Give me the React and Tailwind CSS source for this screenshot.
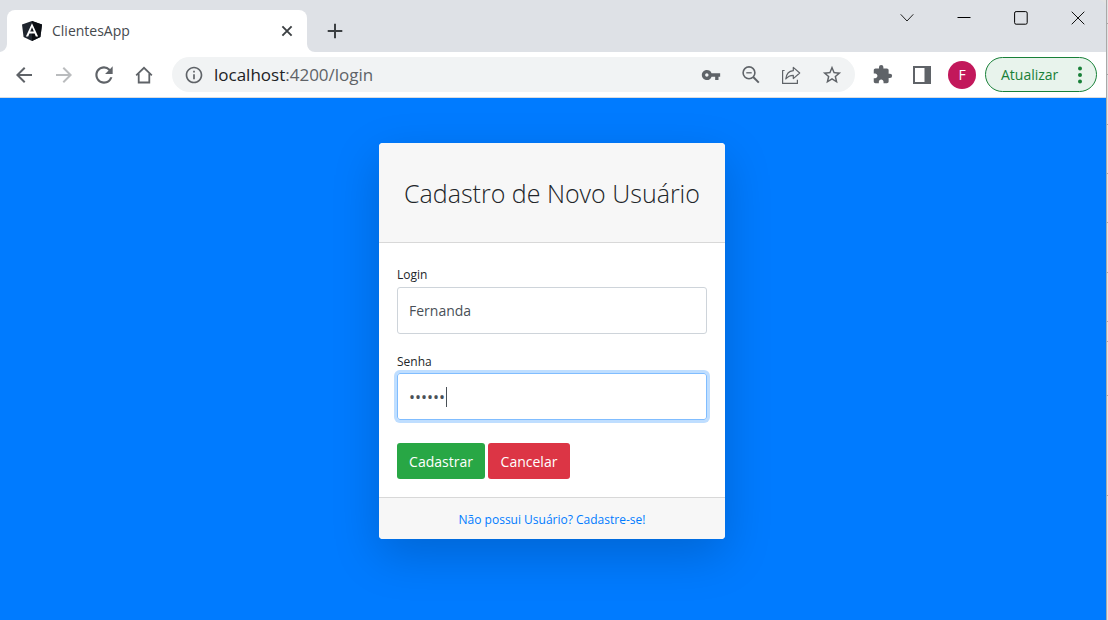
import { useState } from "react";
import {
  MdArrowBack,
  MdArrowForward,
  MdExtension,
  MdInfoOutline,
  MdRefresh,
  MdStarBorder,
  MdVpnKey,
} from "react-icons/md";

function AngularLogo() {
  return (
    <svg viewBox="0 0 20 20" className="size-5 shrink-0" aria-hidden="true">
      <path d="M10 0 0 3.5 1.6 16 10 20l8.4-4L20 3.5Z" fill="#1f252e" />
      <path d="M10 0v20l8.4-4L20 3.5Z" fill="#0b0e13" />
      <path
        d="M10 2.3 3.9 15.4h2.3l1.2-3h5.2l1.2 3h2.3Zm1.8 8.2H8.2L10 6.3Z"
        fill="#fff"
      />
    </svg>
  );
}

function TabCloseIcon() {
  return (
    <svg viewBox="0 0 12 12" className="size-3" fill="none" stroke="#3c4043" strokeWidth="1.9" aria-hidden="true">
      <path d="m1.4 1.4 9.2 9.2M10.6 1.4l-9.2 9.2" />
    </svg>
  );
}

function NewTabIcon() {
  return (
    <svg viewBox="0 0 16 16" className="size-4" fill="none" stroke="#3c4043" strokeWidth="2" aria-hidden="true">
      <path d="M8 .7v14.6M.7 8h14.6" />
    </svg>
  );
}

function ChevronIcon() {
  return (
    <svg viewBox="0 0 14 14" className="size-[14px]" fill="none" stroke="#222" aria-hidden="true">
      <path d="m.7 3.3 6.3 6.7 6.3-6.7" />
    </svg>
  );
}

function MinimizeIcon() {
  return (
    <svg viewBox="0 0 14 14" className="size-[14px]" fill="none" stroke="#000" aria-hidden="true">
      <path d="M.5 6.5h13" />
    </svg>
  );
}

function MaximizeIcon() {
  return (
    <svg viewBox="0 0 14 14" className="size-[14px]" fill="none" stroke="#000" aria-hidden="true">
      <rect x=".6" y=".6" width="12.6" height="12.6" rx="1.5" />
    </svg>
  );
}

function WindowCloseIcon() {
  return (
    <svg viewBox="0 0 14 14" className="size-[14px]" fill="none" stroke="#111" aria-hidden="true">
      <path d="m.7.7 12.6 12.6M13.3.7.7 13.3" />
    </svg>
  );
}

function HomeIcon() {
  return (
    <svg viewBox="0 0 24 24" className="size-6" fill="none" stroke="currentColor" strokeWidth="1.8" aria-hidden="true">
      <path d="m4.200 12.300 7.800-7.500 7.800 7.500" />
      <path d="M6.700 10.500v9h10.600v-9" />
    </svg>
  );
}

function ZoomOutIcon() {
  return (
    <svg viewBox="0 0 20 20" className="size-5" fill="none" stroke="#5f6368" aria-hidden="true">
      <circle cx="8" cy="7.800" r="5.900" strokeWidth="1.600" />
      <path d="M5.300 7.800h5.400" strokeWidth="1.300" />
      <path d="m12.200 12 5.600 5.600" strokeWidth="2" />
    </svg>
  );
}

function ShareIcon() {
  return (
    <svg
      viewBox="0 0 20 20"
      className="size-5"
      fill="none"
      stroke="#5f6368"
      strokeWidth="1.2"
      strokeLinejoin="round"
      aria-hidden="true"
    >
      <path d="M3.600 5.500H1.600v12.900h14.800v-3.600" />
      <path d="M12.300 2.400v3.300c-4.600.5-7 3.400-7.500 8.300 1.900-2.500 4.100-3.700 7.500-3.700v3.300l6.400-5.600Z" />
    </svg>
  );
}

function SidePanelIcon() {
  return (
    <svg viewBox="0 0 18 18" className="size-[18px]" aria-hidden="true">
      <path d="M0 0h18v18H0Zm2 2v14h9.500V2Z" fill="#5f6368" fillRule="evenodd" />
    </svg>
  );
}

function TabFoot({ className, d }) {
  return (
    <svg viewBox="0 0 8 8" className={className} fill="#fff" aria-hidden="true">
      <path d={d} />
    </svg>
  );
}

function TabStrip() {
  return (
    <div className="flex h-[52px] items-end bg-[#dee1e6]">
      <TabFoot className="-ml-px size-2" d="M8 0v8H0a8 8 0 0 0 8-8Z" />
      <div className="flex h-[42px] w-[300px] items-center rounded-t-lg bg-white pr-[14px] pl-[15px]">
        <AngularLogo />
        <span className="ml-[10px] flex-1 pb-0.5 text-[14px] text-[#45494d]">ClientesApp</span>
        <button type="button" aria-label="Fechar guia"><TabCloseIcon /></button>
      </div>
      <TabFoot className="size-2" d="M0 0v8h8a8 8 0 0 1-8-8Z" />
      <button type="button" aria-label="Nova guia" className="ml-3 flex h-[42px] items-center">
        <NewTabIcon />
      </button>
      <div className="ml-auto flex gap-[43px] self-start pt-[11px] pr-[21px]">
        <button type="button" aria-label="Pesquisar guias"><ChevronIcon /></button>
        <button type="button" aria-label="Minimizar"><MinimizeIcon /></button>
        <button type="button" aria-label="Maximizar"><MaximizeIcon /></button>
        <button type="button" aria-label="Fechar"><WindowCloseIcon /></button>
      </div>
    </div>
  );
}

function Toolbar() {
  return (
    <div className="flex h-[46px] items-center border-b border-[#dadce0] bg-white pr-[9px] pl-3 text-[#5f6368]">
      <div className="flex items-center gap-4">
        <button type="button" aria-label="Voltar"><MdArrowBack size={24} /></button>
        <button type="button" aria-label="Avançar" className="text-[#babcbe]"><MdArrowForward size={24} /></button>
        <button type="button" aria-label="Recarregar" className="-mx-px"><MdRefresh size={26} /></button>
        <button type="button" aria-label="Página inicial"><HomeIcon /></button>
      </div>
      <div className="ml-4 flex h-[35px] flex-1 items-center rounded-full bg-[#f1f3f4] pr-3 pl-3">
        <MdInfoOutline size={20} className="shrink-0" />
        <a href="/login" className="ml-[10px] flex-1 text-[17px] text-[#5f6368]">
          <span className="text-[#202124]">localhost</span>:4200/login
        </a>
        <div className="flex items-center gap-5">
          <button type="button" aria-label="Senhas"><MdVpnKey size={20} /></button>
          <button type="button" aria-label="Zoom"><ZoomOutIcon /></button>
          <button type="button" aria-label="Compartilhar"><ShareIcon /></button>
          <button type="button" aria-label="Favoritos"><MdStarBorder size={22} /></button>
        </div>
      </div>
      <button type="button" aria-label="Extensões" className="ml-[17px]"><MdExtension size={21} /></button>
      <button type="button" aria-label="Painel lateral" className="ml-5"><SidePanelIcon /></button>
      <button
        type="button"
        aria-label="Perfil"
        className="ml-[17px] size-7 rounded-full bg-[#c2185b] text-[14px] leading-7 text-white"
      >
        F
      </button>
      <button
        type="button"
        className="ml-[9px] flex h-[35px] w-28 items-center justify-between rounded-full border border-[#188038] bg-[#e8f3ec] pr-[14px] pl-[15px] text-[14px] text-[#188038]"
      >
        Atualizar
        <svg viewBox="0 0 4 18" className="h-[18px] w-1" fill="currentColor" aria-hidden="true">
          <circle cx="2" cy="2.5" r="2" />
          <circle cx="2" cy="9" r="2" />
          <circle cx="2" cy="15.5" r="2" />
        </svg>
      </button>
    </div>
  );
}

function SignUpCard() {
  const [login, setLogin] = useState("Fernanda");
  const [password, setPassword] = useState("123456");

  return (
    <section className="w-full max-w-[346px] overflow-hidden rounded bg-white shadow-[0_16px_48px_rgba(0,0,0,0.175)]">
      <header className="flex h-[100px] items-center justify-center border-b border-[#d8d8d8] bg-[#f7f7f7] pt-0.5">
        <h1 className="text-[25px] font-light text-[#212529]">Cadastro de Novo Usuário</h1>
      </header>
      <form className="px-[18px] pt-6 pb-[18px]" onSubmit={(event) => event.preventDefault()}>
        <label htmlFor="login" className="block text-[12px] leading-4 text-[#212529]">Login</label>
        <input
          id="login"
          type="text"
          value={login}
          onChange={(event) => setLogin(event.target.value)}
          className="mt-1 block h-[47px] w-full rounded-[3px] border border-[#ced4da] px-[11px] text-[14px] text-[#495057] outline-none"
        />
        <label htmlFor="senha" className="mt-5 block text-[12px] leading-4 text-[#212529]">Senha</label>
        <div className="relative mt-[3px]">
          <input
            id="senha"
            type="password"
            value={password}
            onChange={(event) => setPassword(event.target.value)}
            className="block h-[47px] w-full rounded-[3px] border border-[#80bdff] px-[11px] text-[16px] text-[#495057] caret-transparent shadow-[0_0_0_3px_#bfdeff] outline-none"
          />
          <span className="absolute top-[14px] left-[49px] h-5 w-px bg-[#495057]" />
        </div>
        <div className="mt-[23px] flex gap-[3px] text-[14px] text-white">
          <button type="submit" className="h-9 w-[88px] rounded-[3px] bg-[#28a745]">Cadastrar</button>
          <button type="button" className="h-9 w-[82px] rounded-[3px] bg-[#dc3545]">Cancelar</button>
        </div>
      </form>
      <footer className="flex h-[42px] items-center justify-center border-t border-[#d8d8d8] bg-[#f7f7f7] pt-[3px]">
        <a href="/login" className="text-[12px] text-[#007bff]">Não possui Usuário? Cadastre-se!</a>
      </footer>
    </section>
  );
}

function WindowEdge() {
  return (
    <div className="flex w-0.5 flex-col border-l border-[#a9a9a9] bg-[#e3e3e3]" aria-hidden="true">
      <div className="h-6 border-b border-[#a9a9a9]" />
      <div className="h-[51px] border-b border-[#a9a9a9]" />
      <div className="h-[50px] border-b border-[#a9a9a9]" />
      <div className="h-[49px] border-b border-[#a9a9a9]" />
      <div className="h-[49px] border-b border-[#a9a9a9]" />
      <div className="h-[50px] border-b border-[#a9a9a9]" />
      <div className="h-[49px] border-b border-[#a9a9a9]" />
      <div className="h-5 border-b border-[#a9a9a9]" />
      <div className="h-[54px] border-b border-[#a9a9a9]" />
      <div className="h-[100px] border-b border-[#a9a9a9]" />
    </div>
  );
}

export default function App() {
  return (
    <div className="flex min-h-screen bg-[#e3e3e3] font-['Open_Sans','Noto_Sans',sans-serif]">
      <div className="flex min-w-0 flex-1 flex-col overflow-hidden rounded-tr-lg">
        <TabStrip />
        <Toolbar />
        <main className="flex flex-1 items-start justify-center bg-[#007bff] pt-[45px] pr-[18px] pb-12 pl-4">
          <SignUpCard />
        </main>
      </div>
      <WindowEdge />
    </div>
  );
}
